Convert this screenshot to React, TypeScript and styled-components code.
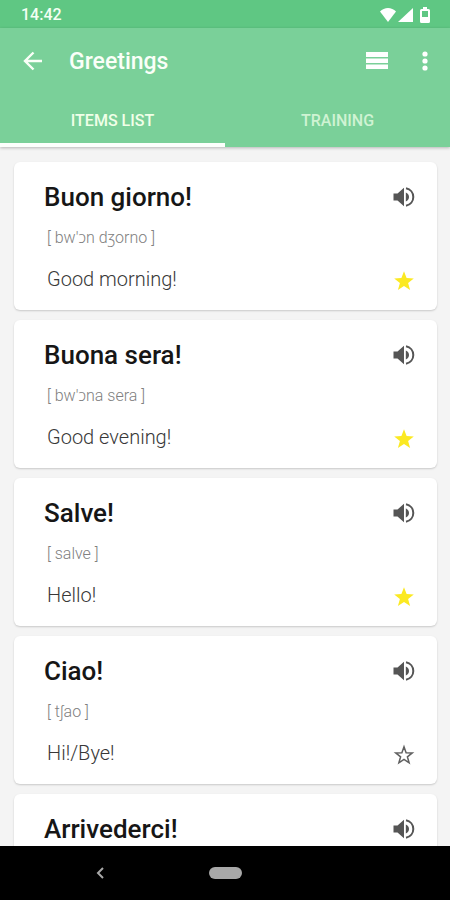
import React, { useState } from "react";
import styled, { createGlobalStyle } from "styled-components";

const GlobalStyle = createGlobalStyle`
  *, *::before, *::after { box-sizing: border-box; }
  body {
    margin: 0;
    background: #f4f4f4;
    font-family: Roboto, "Noto Sans", sans-serif;
  }
  button {
    margin: 0;
    padding: 0;
    border: 0;
    background: none;
    font: inherit;
    color: inherit;
    cursor: pointer;
  }
  svg { display: block; }
`;

const Screen = styled.div`
  display: flex;
  flex-direction: column;
  height: 100vh;
  overflow: hidden;
`;

const StatusBar = styled.div`
  display: flex;
  flex: none;
  align-items: center;
  justify-content: space-between;
  height: 28px;
  padding: 1px 20px 0 21px;
  background: #5fc783;
  color: #f4fff4;
  font-size: 16px;
  font-weight: 500;
`;

const StatusIcons = styled.div`
  display: flex;
  align-items: center;
  gap: 2px;

  svg:last-child { margin-left: 5px; }
`;

const Header = styled.header`
  flex: none;
  background: #7ad099;
  color: #fafff8;
  box-shadow: 0 1px 3px rgba(0, 0, 0, 0.25);
`;

const Toolbar = styled.div`
  display: flex;
  align-items: center;
  height: 66px;
  padding: 0 9px 0 17px;
`;

const IconButton = styled.button`
  display: flex;
  flex: none;
  align-items: center;
  justify-content: center;
  width: 32px;
  height: 32px;
`;

const ScreenTitle = styled.h1`
  flex: 1;
  margin: 0;
  padding: 2px 0 0 20px;
  font-size: 23px;
  line-height: 32px;
  font-weight: 500;
`;

const Actions = styled.div`
  display: flex;
  gap: 16px;
`;

const Tabs = styled.div`
  display: grid;
  grid-template-columns: 1fr 1fr;
`;

const Tab = styled.button<{ $active: boolean }>`
  height: 53px;
  padding-top: 4px;
  border-bottom: 4px solid ${(p) => (p.$active ? "#fcfffc" : "transparent")};
  color: ${(p) => (p.$active ? "#f0ffe8" : "#cff3d3")};
  font-size: 16px;
  line-height: 20px;
  font-weight: 500;
  text-transform: uppercase;
`;

const List = styled.ul`
  display: flex;
  flex: 1;
  flex-direction: column;
  gap: 10px;
  min-height: 0;
  margin: 0;
  padding: 15px 13px 15px 14px;
  overflow-y: auto;
  scrollbar-width: none;
  list-style: none;
`;

const Card = styled.li`
  display: flex;
  flex: none;
  justify-content: space-between;
  min-height: 148px;
  padding: 19px 17px 13px 30px;
  border-radius: 6px;
  background: #fff;
  box-shadow: 0 1px 2px rgba(0, 0, 0, 0.18);
`;

const Phrase = styled.div`
  display: flex;
  flex-direction: column;
  padding-bottom: 6px;
`;

const Term = styled.h2`
  margin: 0;
  color: #161616;
  font-size: 26px;
  line-height: 32px;
  font-weight: 500;
`;

const Phonetic = styled.p`
  margin: 15px 0 0 3px;
  color: #808080;
  font-size: 16px;
  line-height: 20px;
  font-weight: 300;
`;

const Translation = styled.p`
  margin: 19px 0 0 3px;
  color: #383838;
  font-size: 20px;
  line-height: 24px;
  font-weight: 300;
`;

const CardActions = styled.div`
  display: flex;
  flex-direction: column;
  justify-content: space-between;
  color: #555;
`;

const NavBar = styled.nav`
  display: grid;
  flex: none;
  grid-template-columns: 2fr 1fr 2fr;
  align-items: center;
  justify-items: center;
  height: 54px;
  background: #000;
  color: #a8a8a8;
`;

const HomePill = styled.button`
  width: 33px;
  height: 12px;
  border-radius: 6px;
  background: #a8a8a8;
`;

const NavBack = styled(IconButton)`
  margin-left: 20px;
`;

const SpeakerIcon = () => (
  <svg width="22" height="22" viewBox="0 0 22 22" fill="currentColor" aria-hidden="true">
    <path d="M.5 7.500h4L11 1.800v18.400L4.500 14.500h-4z" />
    <path d="M12.800 6.500c2 .7 3.200 2.400 3.200 4.500s-1.200 3.800-3.200 4.500z" />
    <path d="M13 2.200c4.400.9 7.300 4.500 7.300 8.800s-2.900 7.900-7.300 8.800" fill="none" stroke="currentColor" strokeWidth="2" />
  </svg>
);

const StarIcon = ({ filled }: { filled: boolean }) => (
  <svg width="22" height="22" viewBox="0 0 22 22" aria-hidden="true">
    <path
      d={
        filled
          ? "M11 1.200l2.600 6.900 7.200.3-5.700 4.500 2 7-6.100-4-6.100 4 2-7L1.200 8.400l7.200-.3z"
          : "M11 2.800l2.100 5.900 6.200.2-4.900 3.900 1.700 6-5.100-3.500-5.100 3.500 1.700-6-4.900-3.900 6.200-.2z"
      }
      fill={filled ? "#fbe922" : "none"}
      stroke={filled ? "none" : "#606060"}
      strokeWidth="1.500"
    />
  </svg>
);

type PhraseItem = {
  term: string;
  phonetic?: string;
  translation?: string;
  starred: boolean;
};

const phrases: PhraseItem[] = [
  { term: "Buon giorno!", phonetic: "[ bw'ɔn dʒorno ]", translation: "Good morning!", starred: true },
  { term: "Buona sera!", phonetic: "[ bw'ɔna sera ]", translation: "Good evening!", starred: true },
  { term: "Salve!", phonetic: "[ salve ]", translation: "Hello!", starred: true },
  { term: "Ciao!", phonetic: "[ tʃao ]", translation: "Hi!/Bye!", starred: false },
  { term: "Arrivederci!", starred: false },
];

const tabs = ["Items list", "Training"];

export default function App() {
  const [activeTab, setActiveTab] = useState(0);
  const [stars, setStars] = useState(phrases.map((p) => p.starred));

  return (
    <Screen>
      <GlobalStyle />
      <StatusBar>
        <span>14:42</span>
        <StatusIcons>
          <svg width="16" height="14" viewBox="0 0 16 14" fill="#fff" aria-hidden="true">
            <path d="M0 3.500C2.200 1.200 5 0 8 0s5.800 1.200 8 3.500L8 14z" />
          </svg>
          <svg width="15" height="14" viewBox="0 0 15 14" fill="#fff" aria-hidden="true">
            <path d="M15 0v14H0z" />
          </svg>
          <svg width="10" height="16" viewBox="0 0 10 16" aria-hidden="true">
            <path d="M3 0h4v2h1.500Q10 2 10 3.500v11q0 1.500-1.500 1.500h-7Q0 16 0 14.500v-11Q0 2 1.500 2H3z" fill="#fff" />
            <path d="M2 4h6v6H2z" fill="#5fc783" />
          </svg>
        </StatusIcons>
      </StatusBar>

      <Header>
        <Toolbar>
          <IconButton aria-label="Back">
            <svg width="20" height="20" viewBox="0 0 20 20" fill="none" stroke="currentColor" strokeWidth="2.400" aria-hidden="true">
              <path d="M19 10H2.500M10.500 1.500L2 10l8.500 8.500" />
            </svg>
          </IconButton>
          <ScreenTitle>Greetings</ScreenTitle>
          <Actions>
            <IconButton aria-label="Change view">
              <svg width="22" height="18" viewBox="0 0 22 18" fill="#fff" aria-hidden="true">
                <path d="M0 0h22v5H0zM0 6.500h22v4.500H0zM0 12.500h22V17H0z" />
              </svg>
            </IconButton>
            <IconButton aria-label="More options">
              <svg width="6" height="20" viewBox="0 0 6 20" fill="#fff" aria-hidden="true">
                <circle cx="3" cy="3" r="2.600" />
                <circle cx="3" cy="10" r="2.600" />
                <circle cx="3" cy="17" r="2.600" />
              </svg>
            </IconButton>
          </Actions>
        </Toolbar>
        <Tabs role="tablist">
          {tabs.map((label, i) => (
            <Tab key={label} role="tab" aria-selected={i === activeTab} $active={i === activeTab} onClick={() => setActiveTab(i)}>
              {label}
            </Tab>
          ))}
        </Tabs>
      </Header>

      <List>
        {phrases.map((p, i) => (
          <Card key={p.term}>
            <Phrase>
              <Term>{p.term}</Term>
              {p.phonetic && <Phonetic>{p.phonetic}</Phonetic>}
              {p.translation && <Translation>{p.translation}</Translation>}
            </Phrase>
            <CardActions>
              <IconButton aria-label={`Listen to ${p.term}`}>
                <SpeakerIcon />
              </IconButton>
              <IconButton
                aria-label={`Favourite ${p.term}`}
                aria-pressed={stars[i]}
                onClick={() => setStars(stars.map((s, j) => (j === i ? !s : s)))}
              >
                <StarIcon filled={stars[i]} />
              </IconButton>
            </CardActions>
          </Card>
        ))}
      </List>

      <NavBar aria-label="System navigation">
        <NavBack aria-label="System back">
          <svg width="8" height="12" viewBox="0 0 8 12" fill="none" stroke="currentColor" strokeWidth="2" aria-hidden="true">
            <path d="M7 1L2 6l5 5" />
          </svg>
        </NavBack>
        <HomePill aria-label="Home" />
      </NavBar>
    </Screen>
  );
}
